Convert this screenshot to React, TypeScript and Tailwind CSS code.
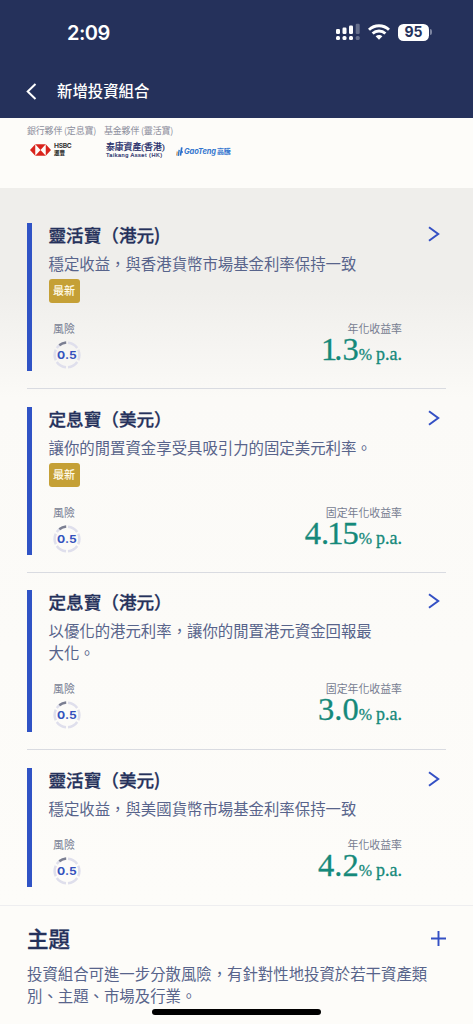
import React from "react";

type Product = {
  title: string;
  closing: string;
  description: string;
  isNew?: boolean;
  rateLabel: string;
  rate: React.ReactNode;
  height: string;
};

const products: Product[] = [
  {
    title: "靈活寶（港元",
    closing: ")",
    description: "穩定收益，與香港貨幣市場基金利率保持一致",
    isNew: true,
    rateLabel: "年化收益率",
    rate: (<><span className="tracking-[-3px]">1</span>.3</>),
    height: "h-[148px]",
  },
  {
    title: "定息寶（美元",
    closing: "）",
    description: "讓你的閒置資金享受具吸引力的固定美元利率。",
    isNew: true,
    rateLabel: "固定年化收益率",
    rate: (<>4<span className="tracking-[-2px]">.</span><span className="tracking-[-1px]">1</span>5</>),
    height: "h-[148px]",
  },
  {
    title: "定息寶（港元",
    closing: "）",
    description: "以優化的港元利率，讓你的閒置港元資金回報最大化。",
    rateLabel: "固定年化收益率",
    rate: "3.0",
    height: "h-[141.5px]",
  },
  {
    title: "靈活寶（美元",
    closing: ")",
    description: "穩定收益，與美國貨幣市場基金利率保持一致",
    rateLabel: "年化收益率",
    rate: "4.2",
    height: "h-[119px]",
  },
];

function StatusBar() {
  return (
    <div className="flex h-[65px] items-center justify-between pl-[67px] pr-[41px] font-['Inter',sans-serif]">
      <span className="text-[20px] leading-[24px] font-semibold tracking-[-0.5px] text-white">2:09</span>
      <div className="-mt-[1px] flex items-center">
        <svg width="25" height="18" viewBox="0 0 25 18" fill="#fff">
          <rect x="0" y="6" width="4" height="5" rx="1.2" />
          <rect x="6.5" y="4.5" width="4" height="6.5" rx="1.2" />
          <rect x="13" y="2.5" width="4" height="8.5" rx="1.2" />
          <rect x="19.7" y="0.7" width="4" height="10.3" rx="1.2" opacity="0.3" />
          <rect x="0" y="13" width="4" height="4" rx="1.5" />
          <rect x="6.5" y="13" width="4" height="4" rx="1.5" />
          <rect x="13" y="13" width="4" height="4" rx="1.5" />
          <rect x="19.7" y="13" width="4" height="4" rx="1.5" opacity="0.3" />
        </svg>
        <svg className="ml-[7px]" width="22" height="16" viewBox="0 0 22 16" fill="none" stroke="#fff" strokeWidth="2.9">
          <path d="M1 5.7C6.6.4 15.4.4 21 5.7" />
          <path d="M4.6 9.5c3.6-3.4 9.2-3.4 12.8 0" />
          <path d="M7.6 12.3c2-1.9 4.8-1.9 6.8 0L11 15.7Z" fill="#fff" stroke="none" />
        </svg>
        <div className="ml-[8px] flex h-[17px] w-[31px] items-center justify-center rounded-[5.5px] bg-white text-[14px] leading-none font-bold text-[#25315b]">95</div>
        <div className="ml-[1px] h-[6px] w-[2px] rounded-r-full bg-[#7d85a1]" />
      </div>
    </div>
  );
}

function Partners() {
  return (
    <div className="flex h-[70px] pt-[6px] pl-[27px] text-[#8d8f9d]">
      <div className="w-[77px]">
        <div className="text-[9px] leading-[14px] tracking-[-0.2px] whitespace-nowrap">銀行夥伴 (定息寶)</div>
        <div className="mt-[5px] flex items-center pl-[3px]">
          <svg width="21" height="12" viewBox="0 0 22 12" preserveAspectRatio="none">
            <path fill="#d9241c" d="M0 6 5.5.3v11.4ZM22 6 16.5.3v11.4ZM5.5.3h11L11 6ZM5.5 11.7h11L11 6Z" />
          </svg>
          <div className="ml-[3px] font-bold text-[#333] font-['Inter','Noto_Sans_CJK_TC',sans-serif]">
            <div className="text-[6.6px] leading-[7px] tracking-[-0.3px]">HSBC</div>
            <div className="text-[5.5px] leading-[7px] font-black">滙豐</div>
          </div>
        </div>
      </div>
      <div>
        <div className="text-[9px] leading-[14px] tracking-[-0.2px] whitespace-nowrap">基金夥伴 (靈活寶)</div>
        <div className="mt-[4px] flex items-center">
          <div className="w-[60px] pl-[2px] text-[#29306c]">
            <div className="text-[8.8px] leading-[10px] font-medium whitespace-nowrap [-webkit-text-stroke:0.2px_#29306c] font-['Liberation_Serif','Noto_Sans_CJK_TC',serif]">泰康資產(香港)</div>
            <div className="text-[5.6px] leading-[7px] tracking-[0.5px] whitespace-nowrap [-webkit-text-stroke:0.2px_#29306c] font-['Liberation_Sans',sans-serif]">Taikang Asset (HK)</div>
          </div>
          <svg className="mt-[2px] ml-[12px]" width="8" height="10" viewBox="0 0 8 10" fill="none" strokeWidth="1.4">
            <path d="M1.4 4.5.6 8.5" stroke="#e7a15d" />
            <path d="M3.2 2.8 2.2 8.8" stroke="#3478c8" />
            <path d="M5.8.4 4.4 8.6M4.8 5H7" stroke="#286fcd" strokeWidth="1.7" />
          </svg>
          <div className="mt-[2px] text-[7.5px] leading-[10px] font-bold tracking-[-0.1px] whitespace-nowrap text-[#3476cf] italic font-['Inter','Noto_Sans_CJK_TC',sans-serif]">GaoTeng<span className="ml-px text-[7px] not-italic">高騰</span></div>
        </div>
      </div>
    </div>
  );
}

function RiskRing() {
  return (
    <div className="mt-[5px] grid h-[28px] w-[28px] place-items-center">
      <svg className="col-start-1 row-start-1" width="28" height="28" viewBox="0 0 28 28" fill="none" strokeWidth="2.5">
        <circle cx="14" cy="14" r="12.4" pathLength="60" stroke="#dfdfec" strokeDasharray="8.4 1.6" strokeDashoffset="-0.8" transform="rotate(-90 14 14)" />
        <path d="M6.3 4.3A12.4 12.4 0 0 1 13.2 1.6" stroke="#7b7f91" />
      </svg>
      <span className="col-start-1 row-start-1 mt-px scale-x-110 text-[11px] leading-none font-bold text-[#3452bd] font-['Inter',sans-serif]">0.5</span>
    </div>
  );
}

function ProductCard({ product }: { product: Product }) {
  return (
    <article className={`flex border-l-[5px] border-[#3053c5] pl-[17px] ${product.height}`}>
      <div className="-mt-[1px] flex min-w-0 flex-1 flex-col">
        <div className="flex h-[26px] items-center justify-between">
          <h2 className="-ml-[0.5px] text-[17.6px] leading-[26px] font-medium whitespace-nowrap text-[#25315b] [-webkit-text-stroke:0.3px_#25315b]">
            {product.title}<span>{product.closing}</span>
          </h2>
          <svg className="mr-[6px] -mt-[2px]" width="12" height="16" viewBox="0 0 12 16" fill="none" stroke="#3450c4" strokeWidth="2">
            <path d="m1 1.2 9.2 6.8L1 14.8" />
          </svg>
        </div>
        <p className="mt-[4px] -ml-[0.5px] w-[330px] text-[15.4px] leading-[22px] text-[#58648b]">{product.description}</p>
        {product.isNew && (
          <span className="mt-[5px] -ml-[0.5px] flex h-[24px] w-[31px] items-center justify-center rounded-[3px] bg-[#c5a036] pb-px text-[11px] font-medium text-[#fffbe9]">最新</span>
        )}
        <div className="mt-[17px] flex justify-between pr-[44px] pl-[4px]">
          <div>
            <div className="text-[10.9px] leading-[16px] text-[#777d91]">風險</div>
            <RiskRing />
          </div>
          <div className="text-right">
            <div className="text-[10.9px] leading-[16px] text-[#777d91]">{product.rateLabel}</div>
            <div className="-mt-[4px] h-[34px] text-[32.5px] leading-[34px] whitespace-nowrap text-[#15897a] [-webkit-text-stroke:0.3px_#15897a] font-['Liberation_Serif',serif]">
              {product.rate}<span className="text-[16px] tracking-normal">% <span className="text-[18px]">p.a.</span></span>
            </div>
          </div>
        </div>
      </div>
    </article>
  );
}

export default function App() {
  return (
    <div className="relative h-[1024px] w-[473px] overflow-hidden bg-[#fdfcf9] font-['Noto_Sans_CJK_TC',sans-serif]">
      <header className="h-[118px] bg-[#25315b]">
        <StatusBar />
        <div className="flex h-[53px] items-center pl-[26px] text-white">
          <svg width="11" height="17" viewBox="0 0 11 17" fill="none" stroke="currentColor" strokeWidth="2">
            <path d="M9.5 1 1.7 8.5 9.5 16" />
          </svg>
          <h1 className="-mt-[3px] ml-[20px] text-[15.4px] leading-[22px] font-medium">新增投資組合</h1>
        </div>
      </header>
      <Partners />
      <main className="h-[717px] bg-[linear-gradient(#efeeeb_0px,#efeeeb_100px,#fbfaf7_210px,#fdfcf9_717px)] px-[27px] pt-[35px]">
        {products.map((product, index) => (
          <div key={product.title} className={index < 3 ? "mb-[17.7px] border-b border-[#d9dbe1] pb-[17px]" : ""}>
            <ProductCard product={product} />
          </div>
        ))}
      </main>
      <section className="border-t border-[#eeeef0] px-[27px] pt-[17px]">
        <div className="flex items-center justify-between">
          <h2 className="text-[21.5px] leading-[30px] font-medium text-[#25315b] [-webkit-text-stroke:0.3px_#25315b]">主題</h2>
          <svg width="15" height="15" viewBox="0 0 14 14" stroke="#3450c4" strokeWidth="1.8"><path d="M0 7h14M7 0v14" /></svg>
        </div>
        <p className="mt-[9px] w-[410px] text-[15.4px] leading-[22px] text-[#58648b]">投資組合可進一步分散風險，有針對性地投資於若干資產類別、主題、市場及行業。</p>
      </section>
      <div className="absolute bottom-[9px] left-[152px] h-[6px] w-[169px] rounded-full bg-black" />
    </div>
  );
}
